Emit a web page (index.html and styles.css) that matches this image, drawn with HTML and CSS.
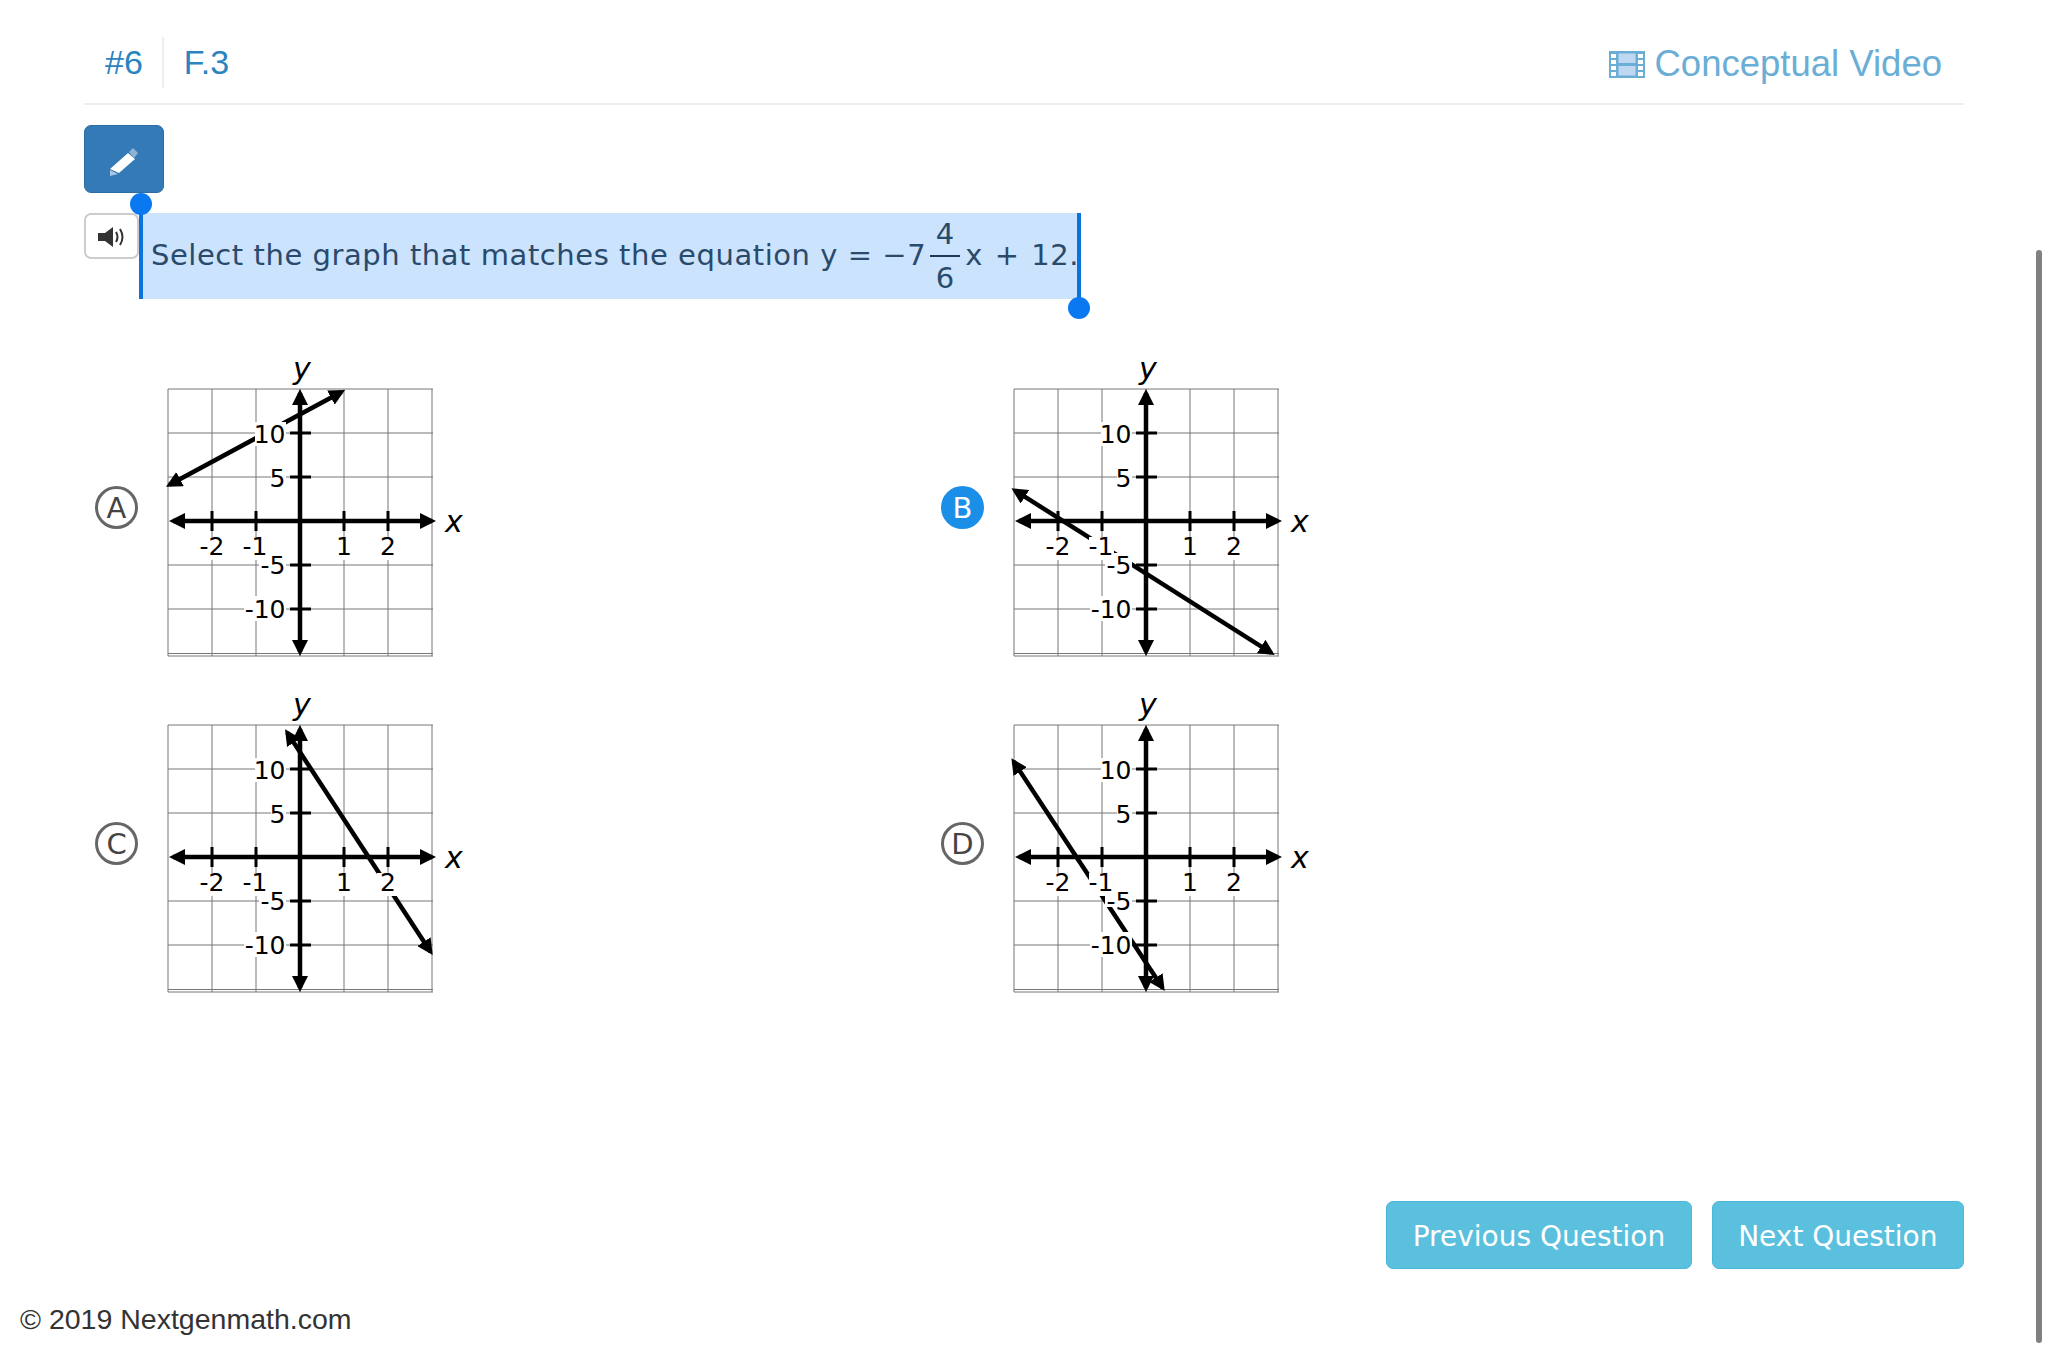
FILE: index.html
```html
<!DOCTYPE html>
<html lang="en">
<head>
    <meta charset="UTF-8">
    <meta name="viewport" content="width=device-width, initial-scale=1.0">
    <title>Nextgenmath Question 6</title>
    <link rel="stylesheet" href="styles.css">
</head>
<body>
    <div class="page">
        <header class="top-bar">
            <span class="top-item">#6</span>
            <span class="top-item standard">F.3</span>
            <a href="#" class="video-link">
                <svg class="film-icon" viewBox="0 0 36 27">
                    <rect width="36" height="27" fill="#6aaed6"/>
                    <path d="M2 3h5v4H2zM2 9h5v4H2zM2 15h5v4H2zM2 21h5v4H2zM29 3h5v4h-5zM29 9h5v4h-5zM29 15h5v4h-5zM29 21h5v4h-5z" fill="#fff"/>
                    <rect x="9.500" y="2.500" width="17" height="9.500" fill="#bdd8f0"/>
                    <rect x="9.500" y="15" width="17" height="9.500" fill="#bdd8f0"/>
                </svg>
                Conceptual Video
            </a>
        </header>

        <button class="pencil-btn">
            <svg viewBox="0 0 30 30" width="30" height="30">
                <path d="M1 22L19 6l7 6L10 26z" fill="#fff"/>
                <path d="M20 5l4-4 5 5-4 5z" fill="#8fb3d6"/>
                <path d="M1 23l8 4-8 2z" fill="#a9c6e3"/>
            </svg>
        </button>

        <div class="question-row">
            <button class="speaker-btn">
                <svg viewBox="0 0 27 20" width="27" height="20">
                    <path d="M0 6h7l8-6v20l-8-6H0z" fill="#333"/>
                    <path d="M18 5q3 5 0 10M22 2q5 8 0 16" fill="none" stroke="#333" stroke-width="2"/>
                </svg>
            </button>
            <div class="selected-text">
                <span class="handle handle-start"></span>
                Select the graph that matches the equation y = &minus;7<span class="frac"><span class="frac-top">4</span><span class="frac-bottom">6</span></span><span class="eq-tail">x + 12.</span>
                <span class="handle handle-end"></span>
            </div>
        </div>

        <div class="answers">
            <div class="answer">
                <span class="choice">A</span>
                <svg class="graph" viewBox="-8 -31 310 310">
                    <defs>
                        <marker id="arrow" viewBox="0 0 16 16" refX="12" refY="8" markerWidth="16" markerHeight="16" markerUnits="userSpaceOnUse" orient="auto-start-reverse">
                            <path d="M0 0L16 8L0 16z" fill="#000"/>
                        </marker>
                    </defs>
                    <path class="grid" d="M0 0V267M44 0V267M88 0V267M132 0V267M176 0V267M220 0V267M264 0V267M0 0H265M0 44H265M0 88H265M0 176H265M0 220H265M0 264.500H265M0 267H265"/>
                    <line class="plot" x1="1.500" y1="95.800" x2="173.500" y2="2.900"/>
                    <path class="label-bg" d="M87 33h31v24H87zM103 76h15v24h-15zM91 164h27v18H91zM76 207h42v25H76zM31 148h26v23H31zM75 148h25v23H75zM165 148h22v23h-22zM209 148h22v23h-22z"/>
                    <line class="plot" x1="132" y1="4" x2="132" y2="263"/>
                    <line class="plot" x1="5" y1="132" x2="264" y2="132"/>
                    <path class="ticks" d="M44 122V142M88 122V142M176 122V142M220 122V142M122 44H143M122 88H143M122 176H143M122 220H143"/>
                    <text class="num" x="117.500" y="54" text-anchor="end">10</text>
                    <text class="num" x="117.500" y="98" text-anchor="end">5</text>
                    <text class="num" x="117.500" y="185" text-anchor="end">-5</text>
                    <text class="num" x="117.500" y="229" text-anchor="end">-10</text>
                    <text class="num" x="44" y="166" text-anchor="middle">-2</text>
                    <text class="num" x="87" y="166" text-anchor="middle">-1</text>
                    <text class="num" x="176" y="166" text-anchor="middle">1</text>
                    <text class="num" x="220" y="166" text-anchor="middle">2</text>
                    <text class="axis-name" x="277" y="143">x</text>
                    <text class="axis-name" x="125" y="-10">y</text>
                </svg>
            </div>
            <div class="answer">
                <span class="choice picked">B</span>
                <svg class="graph" viewBox="-8 -31 310 310">
                    <path class="grid" d="M0 0V267M44 0V267M88 0V267M132 0V267M176 0V267M220 0V267M264 0V267M0 0H265M0 44H265M0 88H265M0 176H265M0 220H265M0 264.500H265M0 267H265"/>
                    <line class="plot" x1="0.800" y1="101.400" x2="257.300" y2="263.900"/>
                    <path class="label-bg" d="M87 33h31v24H87zM103 76h15v24h-15zM91 164h27v18H91zM76 207h42v25H76zM31 148h26v23H31zM75 148h25v23H75zM165 148h22v23h-22zM209 148h22v23h-22z"/>
                    <line class="plot" x1="132" y1="4" x2="132" y2="263"/>
                    <line class="plot" x1="5" y1="132" x2="264" y2="132"/>
                    <path class="ticks" d="M44 122V142M88 122V142M176 122V142M220 122V142M122 44H143M122 88H143M122 176H143M122 220H143"/>
                    <text class="num" x="117.500" y="54" text-anchor="end">10</text>
                    <text class="num" x="117.500" y="98" text-anchor="end">5</text>
                    <text class="num" x="117.500" y="185" text-anchor="end">-5</text>
                    <text class="num" x="117.500" y="229" text-anchor="end">-10</text>
                    <text class="num" x="44" y="166" text-anchor="middle">-2</text>
                    <text class="num" x="87" y="166" text-anchor="middle">-1</text>
                    <text class="num" x="176" y="166" text-anchor="middle">1</text>
                    <text class="num" x="220" y="166" text-anchor="middle">2</text>
                    <text class="axis-name" x="277" y="143">x</text>
                    <text class="axis-name" x="125" y="-10">y</text>
                </svg>
            </div>
            <div class="answer">
                <span class="choice">C</span>
                <svg class="graph" viewBox="-8 -31 310 310">
                    <path class="grid" d="M0 0V267M44 0V267M88 0V267M132 0V267M176 0V267M220 0V267M264 0V267M0 0H265M0 44H265M0 88H265M0 176H265M0 220H265M0 264.500H265M0 267H265"/>
                    <line class="plot" x1="119.200" y1="7.600" x2="262.500" y2="226.700"/>
                    <path class="label-bg" d="M87 33h31v24H87zM103 76h15v24h-15zM91 164h27v18H91zM76 207h42v25H76zM31 148h26v23H31zM75 148h25v23H75zM165 148h22v23h-22zM209 148h22v23h-22z"/>
                    <line class="plot" x1="132" y1="4" x2="132" y2="263"/>
                    <line class="plot" x1="5" y1="132" x2="264" y2="132"/>
                    <path class="ticks" d="M44 122V142M88 122V142M176 122V142M220 122V142M122 44H143M122 88H143M122 176H143M122 220H143"/>
                    <text class="num" x="117.500" y="54" text-anchor="end">10</text>
                    <text class="num" x="117.500" y="98" text-anchor="end">5</text>
                    <text class="num" x="117.500" y="185" text-anchor="end">-5</text>
                    <text class="num" x="117.500" y="229" text-anchor="end">-10</text>
                    <text class="num" x="44" y="166" text-anchor="middle">-2</text>
                    <text class="num" x="87" y="166" text-anchor="middle">-1</text>
                    <text class="num" x="176" y="166" text-anchor="middle">1</text>
                    <text class="num" x="220" y="166" text-anchor="middle">2</text>
                    <text class="axis-name" x="277" y="143">x</text>
                    <text class="axis-name" x="125" y="-10">y</text>
                </svg>
            </div>
            <div class="answer">
                <span class="choice">D</span>
                <svg class="graph" viewBox="-8 -31 310 310">
                    <path class="grid" d="M0 0V267M44 0V267M88 0V267M132 0V267M176 0V267M220 0V267M264 0V267M0 0H265M0 44H265M0 88H265M0 176H265M0 220H265M0 264.500H265M0 267H265"/>
                    <line class="plot" x1="-0.400" y1="36.600" x2="148.500" y2="262.700"/>
                    <path class="label-bg" d="M87 33h31v24H87zM103 76h15v24h-15zM91 164h27v18H91zM76 207h42v25H76zM31 148h26v23H31zM75 148h25v23H75zM165 148h22v23h-22zM209 148h22v23h-22z"/>
                    <line class="plot" x1="132" y1="4" x2="132" y2="263"/>
                    <line class="plot" x1="5" y1="132" x2="264" y2="132"/>
                    <path class="ticks" d="M44 122V142M88 122V142M176 122V142M220 122V142M122 44H143M122 88H143M122 176H143M122 220H143"/>
                    <text class="num" x="117.500" y="54" text-anchor="end">10</text>
                    <text class="num" x="117.500" y="98" text-anchor="end">5</text>
                    <text class="num" x="117.500" y="185" text-anchor="end">-5</text>
                    <text class="num" x="117.500" y="229" text-anchor="end">-10</text>
                    <text class="num" x="44" y="166" text-anchor="middle">-2</text>
                    <text class="num" x="87" y="166" text-anchor="middle">-1</text>
                    <text class="num" x="176" y="166" text-anchor="middle">1</text>
                    <text class="num" x="220" y="166" text-anchor="middle">2</text>
                    <text class="axis-name" x="277" y="143">x</text>
                    <text class="axis-name" x="125" y="-10">y</text>
                </svg>
            </div>
        </div>

        <div class="pager">
            <button class="pager-btn">Previous Question</button>
            <button class="pager-btn">Next Question</button>
        </div>
    </div>

    <footer class="site-footer">&copy; 2019 Nextgenmath.com</footer>
    <div class="scroll-thumb"></div>
</body>
</html>
```

FILE: styles.css
```css
body {
    margin: 0;
    height: 1350px;
    overflow: hidden;
    background: #fff;
    font-family: "DejaVu Sans", sans-serif;
}
.page {
    padding: 0 84px;
}
.top-bar {
    display: flex;
    align-items: center;
    box-sizing: border-box;
    height: 105px;
    padding-top: 21px;
    border-bottom: 2px solid #eee;
    font-family: "Liberation Sans", Arial, sans-serif;
}
.top-item {
    height: 51px;
    padding: 0 19px 0 21px;
    font-size: 34px;
    line-height: 50px;
    color: #2a84bf;
}
.standard {
    border-left: 2px solid #eee;
    padding-left: 20px;
}
.video-link {
    display: flex;
    align-items: center;
    gap: 10px;
    margin: 4px 22px 0 auto;
    font-size: 36.500px;
    color: #6aaed6;
    text-decoration: none;
}
.film-icon {
    width: 36px;
    height: 27px;
}
.pencil-btn {
    display: flex;
    align-items: center;
    justify-content: center;
    width: 80px;
    height: 68px;
    margin-top: 20px;
    padding: 6px 0 0;
    background: #337ab7;
    border: 1px solid #2e6da4;
    border-radius: 7px;
}
.question-row {
    display: flex;
    margin-top: 20px;
}
.speaker-btn {
    display: flex;
    align-items: center;
    justify-content: center;
    width: 55px;
    height: 46px;
    padding: 2px 0 0;
    background: #fff;
    border: 2px solid #ccc;
    border-radius: 7px;
}
.selected-text {
    position: relative;
    box-sizing: border-box;
    width: 942px;
    height: 86px;
    padding: 4px 0 0 12px;
    white-space: nowrap;
    background: #cbe3fd;
    font-size: 29px;
    letter-spacing: 0.550px;
    color: #2a4a6b;
}
.frac {
    display: inline-flex;
    flex-direction: column;
    width: 30px;
    margin: 0 5px 0 4px;
    vertical-align: 21px;
    line-height: 34px;
    text-align: center;
}
.frac-top {
    padding-bottom: 4px;
    border-bottom: 2px solid #1f3a58;
}
.frac-bottom {
    padding-top: 4px;
}
.eq-tail {
    word-spacing: 2px;
}
.handle {
    position: absolute;
    top: 0;
    width: 4px;
    height: 86px;
    background: #0c72dc;
}
.handle::after {
    content: "";
    position: absolute;
    left: -9px;
    width: 22px;
    height: 22px;
    border-radius: 50%;
    background: #0a78f0;
}
.handle-start {
    left: 0;
}
.handle-start::after {
    top: -20px;
}
.handle-end {
    right: 0;
}
.handle-end::after {
    bottom: -20px;
}
.answers {
    display: grid;
    grid-template-columns: 846px 846px;
    row-gap: 26px;
    margin: 59px 0 0 11px;
}
.answer {
    display: flex;
    align-items: flex-start;
    gap: 22px;
}
.choice {
    display: flex;
    align-items: center;
    justify-content: center;
    box-sizing: border-box;
    width: 43px;
    height: 43px;
    margin-top: 128px;
    border: 3.500px solid #666;
    border-radius: 50%;
    font-size: 29px;
    color: #444;
}
.picked {
    background: #1b8fe8;
    border-color: #1b8fe8;
    color: #fff;
}
.graph {
    width: 310px;
    height: 310px;
    overflow: visible;
}
.grid {
    fill: none;
    stroke: #777;
    stroke-width: 1;
}
.plot {
    stroke: #000;
    stroke-width: 4.500;
    marker-start: url(#arrow);
    marker-end: url(#arrow);
}
.ticks {
    fill: none;
    stroke: #000;
    stroke-width: 3;
}
.label-bg {
    fill: #fff;
}
.num {
    font-size: 25px;
    fill: #000;
}
.axis-name {
    font-size: 30px;
    font-style: italic;
    fill: #000;
}
.pager {
    display: flex;
    justify-content: flex-end;
    gap: 20px;
    margin-top: 197px;
}
.pager-btn {
    height: 68px;
    padding: 2px 25.500px 0;
    background: #5bc0de;
    border: 1px solid #46b8da;
    border-radius: 7px;
    font-family: "DejaVu Sans", sans-serif;
    font-size: 28px;
    color: #fff;
}
.site-footer {
    margin-top: 34px;
    padding-left: 20px;
    font-family: "Liberation Sans", Arial, sans-serif;
    font-size: 28.500px;
    color: #333;
}
.scroll-thumb {
    position: fixed;
    top: 250px;
    left: 2036px;
    width: 6px;
    height: 1093px;
    border-radius: 3px;
    background: #808080;
}
```
